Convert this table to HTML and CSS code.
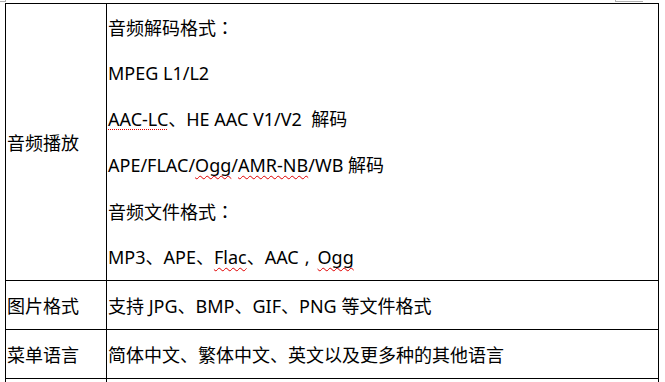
FILE: index.html
```html
<!DOCTYPE html>
<html lang="zh-CN">
<head>
<meta charset="utf-8">
<title>规格</title>
<link rel="stylesheet" href="styles.css">
</head>
<body>
<div class="page">
  <span class="mark mark-left"></span>
  <span class="mark mark-right"></span>
  <table class="spec">
    <tr class="row-tall">
      <td class="label">音频播放</td>
      <td class="value">
        <div class="line">音频解码格式<span class="cp" lang="zh-TW">：</span></div>
        <div class="line">MPEG L1/L2</div>
        <div class="line"><span class="dot">AAC-LC</span>、HE AAC V1/V2&nbsp; 解码</div>
        <div class="line">APE/FLAC/<span class="wavy">Ogg</span>/<span class="wavy">AMR-NB</span>/WB 解码</div>
        <div class="line">音频文件格式<span class="cp" lang="zh-TW">：</span></div>
        <div class="line">MP3、APE、<span class="wavy">Flac</span>、AAC<span class="cm">,</span><span class="wavy">Ogg</span></div>
      </td>
    </tr>
    <tr class="row">
      <td class="label">图片格式</td>
      <td class="value">支持 JPG、BMP、GIF、PNG 等文件格式</td>
    </tr>
    <tr class="row">
      <td class="label">菜单语言</td>
      <td class="value">简体中文、繁体中文、英文以及更多种的其他语言</td>
    </tr>
    <tr class="row">
      <td class="label"></td>
      <td class="value"></td>
    </tr>
  </table>
</div>
</body>
</html>
```
FILE: styles.css
```css
html, body {
  margin: 0;
  padding: 0;
  background: #ffffff;
}
body {
  font-family: "Noto Sans", "Noto Sans CJK SC", sans-serif;
  font-size: 18px;
  color: #000000;
  overflow: hidden;
}
.page {
  position: relative;
  padding: 3px 0 0 5px;
}
.mark {
  position: absolute;
  top: 0;
  height: 1px;
  border-bottom: 1px solid #b0b0b0;
}
.mark-left {
  left: 0;
  width: 5px;
  border-right: 1px solid #b0b0b0;
}
.mark-right {
  left: 615px;
  width: 27px;
  border-left: 1px solid #b0b0b0;
}
.spec {
  border-collapse: collapse;
  width: 654px;
  table-layout: fixed;
}
.spec td {
  border: 1px solid #000000;
  padding: 0 1px;
  vertical-align: middle;
  white-space: nowrap;
}
.spec td.label {
  width: 98px;
}
.row td {
  height: 48px;
}
.line {
  height: 46px;
  line-height: 46px;
}
.cp {
  font-family: "Noto Sans CJK TC", "Noto Sans CJK SC", sans-serif;
}
.cm {
  padding: 0 8px 0 6px;
}
.wavy {
  text-decoration: underline wavy #e00000;
  text-decoration-thickness: 1px;
  text-underline-offset: 3px;
  text-decoration-skip-ink: none;
}
.dot {
  text-decoration: underline dotted #e00000;
  text-decoration-thickness: 1px;
  text-underline-offset: 3px;
  text-decoration-skip-ink: none;
}
```
